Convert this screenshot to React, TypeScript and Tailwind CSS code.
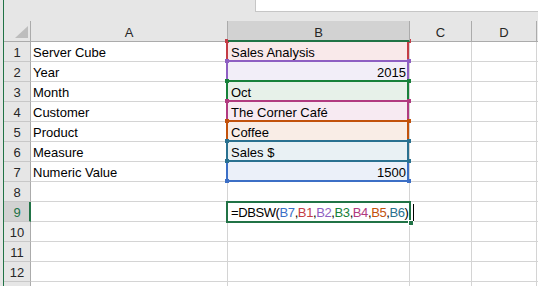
import React from "react";

type RowDef = {
  n: number;
  a: string;
  b: string;
  right?: boolean;
  fill?: string;
  box?: string;
  sq?: string;
  z?: string;
};

const rows: RowDef[] = [
  { n: 1, a: "Server Cube", b: "Sales Analysis", fill: "bg-[#f9e9ea]", box: "border-[#c43c46]", sq: "bg-[#c43c46]", z: "z-[2]" },
  { n: 2, a: "Year", b: "2015", right: true, fill: "bg-[#f2eef8]", box: "border-[#8e5fc2]", sq: "bg-[#8e5fc2]", z: "z-[3]" },
  { n: 3, a: "Month", b: "Oct", fill: "bg-[#e7f1e9]", box: "border-[#17813a]", sq: "bg-[#17813a]", z: "z-[4]" },
  { n: 4, a: "Customer", b: "The Corner Café", fill: "bg-[#f7eaf2]", box: "border-[#b13a80]", sq: "bg-[#b13a80]", z: "z-[5]" },
  { n: 5, a: "Product", b: "Coffee", fill: "bg-[#f9ede6]", box: "border-[#c2520c]", sq: "bg-[#c2520c]", z: "z-[6]" },
  { n: 6, a: "Measure", b: "Sales $", fill: "bg-[#e9f1f4]", box: "border-[#2a7190]", sq: "bg-[#2a7190]", z: "z-[7]" },
  { n: 7, a: "Numeric Value", b: "1500", right: true, fill: "bg-[#ebf0f9]", box: "border-[#3c6fc6]", sq: "bg-[#3c6fc6]", z: "z-[1]" },
  { n: 8, a: "", b: "" },
  { n: 9, a: "", b: "" },
  { n: 10, a: "", b: "" },
  { n: 11, a: "", b: "" },
  { n: 12, a: "", b: "" },
  { n: 13, a: "", b: "" },
];

const grid = "grid grid-cols-[27px_197px_182px_62px_65px_1fr]";

function RangeBox({ box, sq, z }: { box: string; sq: string; z: string }) {
  return (
    <div className={`absolute left-[-2px] top-[-2px] w-[183px] h-[22px] border-2 pointer-events-none ${box} ${z}`}>
      <div className={`absolute left-[-3px] top-[-3px] w-[4px] h-[4px] ${sq}`} />
      <div className={`absolute left-[179px] top-[-3px] w-[4px] h-[4px] ${sq}`} />
      <div className={`absolute left-[-3px] top-[17px] w-[4px] h-[4px] ${sq}`} />
      <div className={`absolute left-[179px] top-[17px] w-[4px] h-[4px] ${sq}`} />
    </div>
  );
}

function Formula() {
  return (
    <span className="whitespace-nowrap tracking-[-0.4px] text-black">
      =DBSW(
      <span className="text-[#3c6fc6]">B7</span>,
      <span className="text-[#c43c46]">B1</span>,
      <span className="text-[#8e5fc2]">B2</span>,
      <span className="text-[#17813a]">B3</span>,
      <span className="text-[#b13a80]">B4</span>,
      <span className="text-[#c2520c]">B5</span>,
      <span className="text-[#2a7190]">B6</span>)
    </span>
  );
}

export default function App() {
  return (
    <div className="w-[538px] h-[286px] overflow-hidden bg-[#e6e6e6] flex font-['Liberation_Sans',Arial,sans-serif] text-[13px] leading-[15px]">
      <div className="w-[3px] shrink-0" />
      <div className="w-px shrink-0 bg-[#217346]" />
      <div className="flex-1 min-w-0 flex flex-col">
        {/* top strip */}
        <div className="h-[21px] shrink-0 flex items-start">
          <div className="w-[251px] shrink-0" />
          <div className="flex-1 h-[12px] bg-white border-l border-b border-[#c6c6c6]" />
        </div>
        {/* column headers */}
        <div className={`${grid} h-[21px] shrink-0 text-[#262626]`}>
          <div className="border-r border-b border-[#ababab] flex items-end justify-end pr-[2px] pb-[3px]">
            <svg width="13" height="12" viewBox="0 0 13 12">
              <polygon points="0,12 13,12 13,0" fill="#bdbdbd" />
            </svg>
          </div>
          <div className="border-r border-b border-[#ababab] flex items-center justify-center pt-[3px]">A</div>
          <div className="relative z-[20] bg-[#d2d2d2] border-r border-[#ababab] border-b-2 border-b-[#217346] flex items-center justify-center pt-[4px]">B</div>
          <div className="border-r border-b border-[#ababab] flex items-center justify-center pt-[3px]">C</div>
          <div className="border-r border-b border-[#ababab] flex items-center justify-center pt-[3px]">D</div>
          <div className="border-b border-[#ababab]" />
        </div>
        {/* body */}
        <div className="flex flex-col">
          {rows.map((r) => {
            const sel = r.n === 9;
            return (
              <div key={r.n} className={`${grid} h-[20px] shrink-0`}>
                <div
                  className={
                    sel
                      ? "bg-[#d2d2d2] text-[#217346] border-b border-[#c8c8c8] border-r-2 border-r-[#217346] flex items-end justify-center pb-px pl-px"
                      : "bg-[#e6e6e6] text-[#262626] border-b border-[#c8c8c8] border-r border-r-[#ababab] flex items-end justify-center pb-px"
                  }
                >
                  {r.n < 13 ? r.n : ""}
                </div>
                <div className="bg-white border-r border-b border-[#d4d4d4] flex items-end pl-[2px] pb-px text-black whitespace-nowrap">
                  {r.a}
                </div>
                <div
                  className={`relative border-r border-b border-[#d4d4d4] flex items-end pb-px text-black whitespace-nowrap ${
                    r.fill ? r.fill : "bg-white"
                  } ${r.right ? "justify-end pr-[3px]" : "pl-[3px]"}`}
                >
                  {sel ? (
                    <>
                      <div className="absolute left-[-2px] top-[-1px] w-[185px] h-[22px] border-2 border-[#217346] z-[10]">
                        <div className="absolute left-[180px] top-[17px] w-[6px] h-[6px] bg-white" />
                        <div className="absolute left-[181px] top-[18px] w-[4px] h-[4px] bg-[#217346]" />
                      </div>
                      <span className="relative z-[30] flex items-end">
                        <Formula />
                        <span className="inline-block w-px h-[17px] bg-black ml-[4px] mb-[-1px]" />
                      </span>
                    </>
                  ) : (
                    <>
                      {r.box && r.sq && r.z ? <RangeBox box={r.box} sq={r.sq} z={r.z} /> : null}
                      <span className="relative z-[30]">{r.b}</span>
                    </>
                  )}
                </div>
                <div className="bg-white border-r border-b border-[#d4d4d4]" />
                <div className="bg-white border-r border-b border-[#d4d4d4]" />
                <div className="bg-white border-b border-[#d4d4d4]" />
              </div>
            );
          })}
        </div>
      </div>
    </div>
  );
}
